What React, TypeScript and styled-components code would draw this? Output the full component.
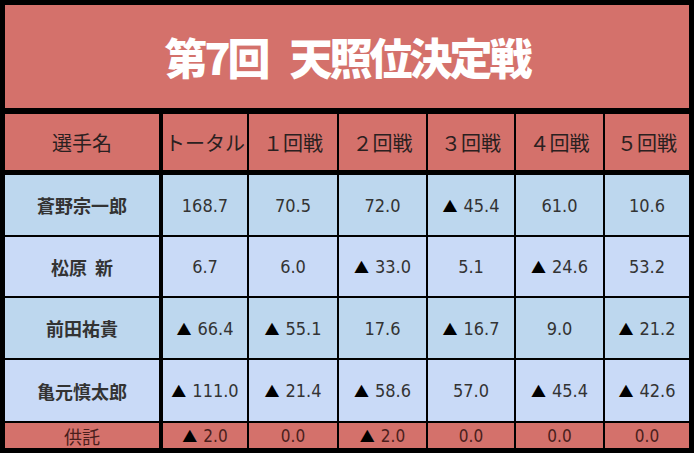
import React from "react";
import styled, { createGlobalStyle } from "styled-components";

const Global = createGlobalStyle`
  html, body { margin: 0; padding: 0; background: #fff; }
  body { width: 694px; height: 453px; overflow: hidden; }
`;

const RED = "#D4716B";
const BLUE_A = "#BDD7EE";
const BLUE_B = "#C9DAF7";

const Board = styled.div`
  display: grid;
  grid-template-columns: 156px 84px 88px 87px 86px 87px 84px;
  grid-template-rows: 107px 59px 60px 59px 60px 61px 25px;
  gap: 2px;
  padding: 5px;
  width: 694px;
  height: 453px;
  box-sizing: border-box;
  background: #000;
`;

const Title = styled.div`
  grid-column: 1 / -1;
  background: ${RED};
  border-bottom: 4px solid #000;
  display: flex;
  align-items: center;
  justify-content: center;
  color: #fff;
  font-family: "Noto Sans CJK JP", sans-serif;
  font-weight: 900;
  font-size: 43px;
  letter-spacing: -3px;
  padding-bottom: 2px;
`;

const TitleGap = styled.span`
  display: inline-block;
  width: 22px;
`;

const Cell = styled.div<{ $bg: string; $first?: boolean; $head?: boolean; $foot?: boolean; $name?: boolean }>`
  background: ${(p) => p.$bg};
  border-right: ${(p) => (p.$first ? "2px solid #000" : "none")};
  border-bottom: ${(p) => (p.$head ? "3px solid #000" : "none")};
  display: flex;
  align-items: center;
  justify-content: center;
  white-space: pre;
  overflow: hidden;
  font-family: "Noto Sans CJK JP", sans-serif;
  font-weight: ${(p) => (p.$name ? 700 : 400)};
  font-size: ${(p) => (p.$head ? "20px" : p.$name ? "18px" : "18px")};
  color: ${(p) => (p.$foot ? "#4a1e1c" : p.$head ? "#2a2020" : "#333")};
`;

const Num = styled.span<{ $foot?: boolean }>`
  font-family: "DejaVu Sans Condensed", "DejaVu Sans", sans-serif;
  font-size: ${(p) => (p.$foot ? "17px" : "18px")};
`;

const Tri = styled.span`
  font-family: "Noto Sans CJK JP", sans-serif;
  color: #000;
  font-size: 15px;
  margin-right: 6px;
`;

const heads = ["選手名", "トータル", "１回戦", "２回戦", "３回戦", "４回戦", "５回戦"];

const rows: { name: string; vals: string[] }[] = [
  { name: "蒼野宗一郎", vals: ["168.7", "70.5", "72.0", "▲45.4", "61.0", "10.6"] },
  { name: "松原  新", vals: ["6.7", "6.0", "▲33.0", "5.1", "▲24.6", "53.2"] },
  { name: "前田祐貴", vals: ["▲66.4", "▲55.1", "17.6", "▲16.7", "9.0", "▲21.2"] },
  { name: "亀元慎太郎", vals: ["▲111.0", "▲21.4", "▲58.6", "57.0", "▲45.4", "▲42.6"] },
];

const foot = ["▲2.0", "0.0", "▲2.0", "0.0", "0.0", "0.0"];

function Value({ v, footer }: { v: string; footer?: boolean }) {
  const neg = v.startsWith("▲");
  return (
    <>
      {neg && <Tri>▲</Tri>}
      <Num $foot={footer}>{neg ? v.slice(1) : v}</Num>
    </>
  );
}

export default function App() {
  return (
    <>
      <Global />
      <Board>
        <Title>
          第7回<TitleGap />天照位決定戦
        </Title>
        {heads.map((h, i) => (
          <Cell key={h} $bg={RED} $head $first={i === 0}>
            {h}
          </Cell>
        ))}
        {rows.map((r, ri) => {
          const bg = ri % 2 === 0 ? BLUE_A : BLUE_B;
          return (
            <React.Fragment key={r.name}>
              <Cell $bg={bg} $first $name>
                {r.name}
              </Cell>
              {r.vals.map((v, i) => (
                <Cell key={i} $bg={bg}>
                  <Value v={v} />
                </Cell>
              ))}
            </React.Fragment>
          );
        })}
        <Cell $bg={RED} $first $foot>
          供託
        </Cell>
        {foot.map((v, i) => (
          <Cell key={i} $bg={RED} $foot>
            <Value v={v} footer />
          </Cell>
        ))}
      </Board>
    </>
  );
}
